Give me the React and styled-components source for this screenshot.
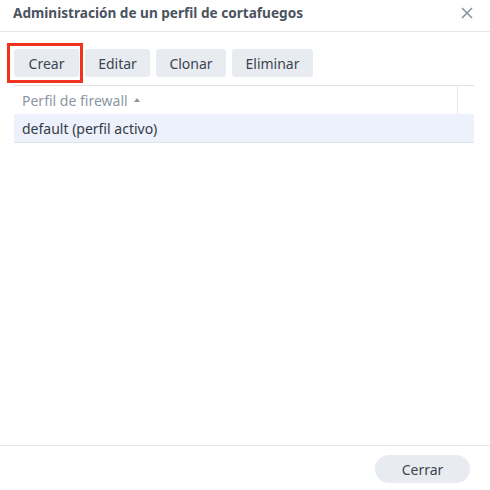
import React from "react";
import styled, { createGlobalStyle } from "styled-components";

const Global = createGlobalStyle`
  html, body { margin: 0; padding: 0; background: #fff; }
  body { font-family: "Noto Sans", "Open Sans", sans-serif; }
`;

const Dialog = styled.div`
  width: 490px;
  height: 490px;
  display: flex;
  flex-direction: column;
  background: #fff;
  box-sizing: border-box;
`;

const Header = styled.div`
  height: 32px;
  box-sizing: border-box;
  border-bottom: 1px solid #e3e7ec;
  display: flex;
  align-items: center;
  justify-content: space-between;
  padding: 0 17px 0 13px;
`;

const Title = styled.div`
  font-size: 13.6px;
  font-weight: 700;
  color: #4a535e;
  margin-top: -6px;
`;

const Close = styled.div`
  width: 12px;
  height: 12px;
  margin-top: -6px;
  display: flex;
`;

const Body = styled.div`
  flex: 1;
  padding: 17px 16px 0 14px;
`;

const Toolbar = styled.div`
  display: flex;
  gap: 6px;
`;

const Button = styled.button`
  position: relative;
  height: 28px;
  padding: 0;
  width: ${(p) => p.$w}px;
  border: none;
  border-radius: 3px;
  background: #e8ecf1;
  color: #3b4450;
  font-family: "Noto Sans", "Open Sans", sans-serif;
  font-size: 14px;

  &::after {
    content: "";
    display: ${(p) => (p.$highlight ? "block" : "none")};
    position: absolute;
    left: -7px;
    right: -4px;
    top: -6px;
    bottom: -6px;
    border: 3px solid #f0321e;
  }
`;

const Table = styled.div`
  margin-top: 8px;
  border-top: 1px solid #dfe3e8;
`;

const HeadRow = styled.div`
  display: flex;
  height: 28px;
  align-items: stretch;
`;

const HeadCell = styled.div`
  flex: 1;
  display: flex;
  align-items: center;
  padding-left: 8px;
  font-size: 14px;
  color: #8d97a3;
  gap: 6px;
  border-right: 1px solid #e3e7ec;
`;

const HeadSpacer = styled.div`
  width: 16px;
`;

const Row = styled.div`
  height: 28px;
  display: flex;
  align-items: center;
  padding-left: 8px;
  background: #ecf1fb;
  border-bottom: 1px solid #dfe5ee;
  font-size: 14px;
  color: #333b44;
`;

const Footer = styled.div`
  height: 45px;
  box-sizing: border-box;
  border-top: 1px solid #e3e7ec;
  display: flex;
  justify-content: flex-end;
  align-items: flex-start;
  padding: 9px 20px 0 0;
`;

const PillButton = styled.button`
  width: 95px;
  height: 28px;
  border: none;
  border-radius: 14px;
  background: #e8ecf1;
  color: #3b4450;
  font-family: "Noto Sans", "Open Sans", sans-serif;
  font-size: 14px;
`;

export default function App() {
  return (
    <>
      <Global />
      <Dialog>
        <Header>
          <Title>Administración de un perfil de cortafuegos</Title>
          <Close>
            <svg width="12" height="12" viewBox="0 0 12 12">
              <path d="M1 1L11 11M11 1L1 11" stroke="#8a939d" strokeWidth="1.6" />
            </svg>
          </Close>
        </Header>
        <Body>
          <Toolbar>
            <Button $w={65} $highlight>Crear</Button>
            <Button $w={65}>Editar</Button>
            <Button $w={70}>Clonar</Button>
            <Button $w={81}>Eliminar</Button>
          </Toolbar>
          <Table>
            <HeadRow>
              <HeadCell>
                Perfil de firewall
                <svg width="6" height="4" viewBox="0 0 6 4">
                  <path d="M0 4L3 0L6 4Z" fill="#8d97a3" />
                </svg>
              </HeadCell>
              <HeadSpacer />
            </HeadRow>
            <Row>default (perfil activo)</Row>
          </Table>
        </Body>
        <Footer>
          <PillButton>Cerrar</PillButton>
        </Footer>
      </Dialog>
    </>
  );
}
